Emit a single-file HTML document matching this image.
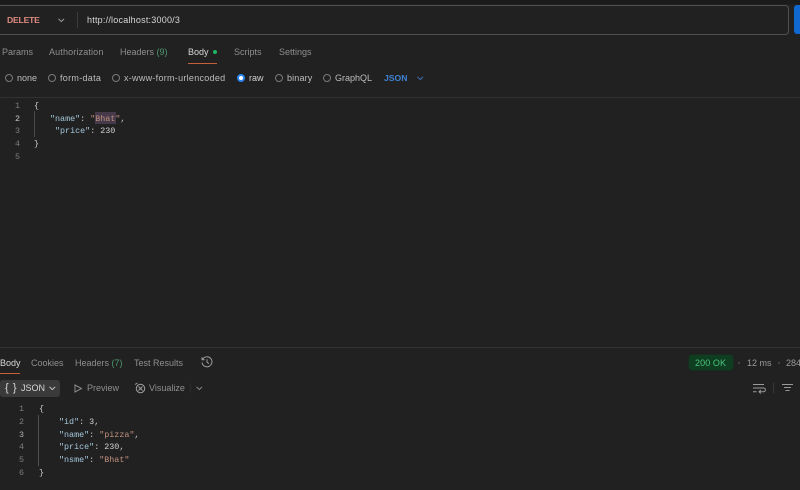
<!DOCTYPE html>
<html style="background:#212121"><head><meta charset="utf-8"><style>
*{margin:0;padding:0;box-sizing:border-box}
html,body{width:800px;height:490px;overflow:hidden;background:#212121}
#w{position:absolute;left:0;top:0;width:800px;height:490px;background:#212121;filter:blur(.35px);overflow:hidden;font-family:"Liberation Sans",sans-serif;color:#a6a6a6;font-size:9px}
.a{position:absolute;white-space:nowrap;line-height:12px}
.m{font-family:"Liberation Mono",monospace;font-size:8.4px;line-height:12px}
.ln{color:#7d7d7d}
.k{color:#a4c8dc}.s{color:#c0917e}.n{color:#d2d2d2}.p{color:#cccccc}
.r{position:absolute;width:8px;height:8px;border:1px solid #7a7a7a;border-radius:50%;top:74px}
.l{position:absolute}
.o{color:#bdbdbd;top:72px}
svg{position:absolute;fill:none;overflow:visible}
</style></head><body><div id="w">
<div class="l" style="left:0;top:0;width:800px;height:4px;background:#1b1b1b"></div>
<div class="l" style="left:-6px;top:5px;width:795px;height:30px;border:1px solid #505050;border-radius:4px"></div>
<div class="l" style="left:794px;top:5px;width:10px;height:29px;background:#0f69d1;border-radius:3px"></div>
<div class="a" style="left:7px;top:14px;color:#e08a80;font-weight:bold;font-size:8.6px;letter-spacing:-.2px">DELETE</div>
<svg style="left:58px;top:18px" width="7" height="5"><path d="M.5 .8 3.3 3.6 6.1 .8" stroke="#a0a0a0"/></svg>
<div class="l" style="left:77px;top:12px;width:1px;height:16px;background:#3c3c3c"></div>
<div class="a" style="left:87px;top:14px;color:#d8d8d8;font-size:9px;letter-spacing:.22px">http://localhost:3000/3</div>

<div class="a" style="left:2px;top:46px;color:#8f8f8f">Params</div>
<div class="a" style="left:49px;top:46px;color:#8f8f8f;letter-spacing:.15px">Authorization</div>
<div class="a" style="left:120px;top:46px;color:#8f8f8f">Headers <span style="color:#4f9a72">(9)</span></div>
<div class="a" style="left:188px;top:46px;color:#d8d8d8">Body</div>
<div class="l" style="left:213px;top:50px;width:4px;height:4px;border-radius:50%;background:#1fb565"></div>
<div class="l" style="left:188px;top:63px;width:29px;height:1px;background:#c4613c"></div>
<div class="a" style="left:234px;top:46px;color:#8f8f8f">Scripts</div>
<div class="a" style="left:279px;top:46px;color:#8f8f8f">Settings</div>

<div class="r" style="left:5px"></div><div class="a o" style="left:17px">none</div>
<div class="r" style="left:48px"></div><div class="a o" style="left:60px;letter-spacing:.3px">form-data</div>
<div class="r" style="left:112px"></div><div class="a o" style="left:124px;letter-spacing:.28px">x-www-form-urlencoded</div>
<div class="r" style="left:237px;border:2.5px solid #2a84ec;background:#fff"></div><div class="a o" style="left:249px;color:#d0d0d0">raw</div>
<div class="r" style="left:275px"></div><div class="a o" style="left:287px;letter-spacing:.15px">binary</div>
<div class="r" style="left:323px"></div><div class="a o" style="left:335px">GraphQL</div>
<div class="a" style="left:384px;top:72px;color:#3f82d4;font-weight:bold;font-size:8.6px">JSON</div>
<svg style="left:417px;top:76px" width="7" height="5"><path d="M.5 .8 3.3 3.6 6.1 .8" stroke="#3f76b8"/></svg>
<div class="l" style="left:0;top:97px;width:800px;height:1px;background:#313131"></div>

<div class="a m ln" style="left:15px;top:100px">1</div>
<div class="a m" style="left:15px;top:113px;color:#c8c8c8">2</div>
<div class="a m ln" style="left:15px;top:125px">3</div>
<div class="a m ln" style="left:15px;top:138px">4</div>
<div class="a m ln" style="left:15px;top:151px">5</div>
<div class="l" style="left:34px;top:111px;width:1px;height:26px;background:#4a4a4a"></div>
<div class="l" style="left:95px;top:112px;width:21px;height:12px;background:#46394a"></div>
<div class="a m p" style="left:34px;top:100px">{</div>
<div class="a m" style="left:50px;top:113px"><span class="k">"name"</span><span class="p">: </span><span class="s">"Bhat"</span><span class="p">,</span></div>
<div class="a m" style="left:55px;top:125px"><span class="k">"price"</span><span class="p">: </span><span class="n">230</span></div>
<div class="a m p" style="left:34px;top:138px">}</div>

<div class="l" style="left:0;top:347px;width:800px;height:1px;background:#333"></div>
<div class="a" style="left:0;top:357px;color:#d8d8d8">Body</div>
<div class="l" style="left:0;top:373px;width:20px;height:1px;background:#c4613c"></div>
<div class="a" style="left:31px;top:357px;color:#8f8f8f">Cookies</div>
<div class="a" style="left:75px;top:357px;color:#8f8f8f">Headers <span style="color:#4f9a72">(7)</span></div>
<div class="a" style="left:134px;top:357px;color:#8f8f8f">Test Results</div>
<svg style="left:201px;top:356px" width="12" height="12" stroke="#9a9a9a"><path d="M1.5 3.5A5 5 0 1 1 1 6.5M1 1.2V3.8H3.6M6 3.2V6.2L8 7.6"/></svg>

<div class="l" style="left:689px;top:355px;width:44px;height:15px;border-radius:3px;background:#0f3d20;box-shadow:0 0 2px #0f3d20"></div>
<div class="a" style="left:695px;top:357px;color:#4cc27e;letter-spacing:.1px">200 OK</div>
<div class="l" style="left:738px;top:362px;width:2px;height:2px;border-radius:50%;background:#4a4a4a"></div>
<div class="a" style="left:747px;top:357px;color:#9a9a9a">12 ms</div>
<div class="l" style="left:778px;top:362px;width:2px;height:2px;border-radius:50%;background:#4a4a4a"></div>
<div class="a" style="left:786px;top:357px;color:#9a9a9a">284 B</div>

<div class="l" style="left:0;top:380px;width:60px;height:17px;border-radius:3px;background:#3a3a3a"></div>
<div class="a" style="left:5px;top:382px;color:#d8d8d8;font-size:11px;letter-spacing:.6px">{ }</div>
<div class="a" style="left:21px;top:382px;color:#d8d8d8">JSON</div>
<svg style="left:49px;top:386px" width="7" height="5"><path d="M.5 .8 3.3 3.6 6.1 .8" stroke="#c8c8c8"/></svg>
<svg style="left:74px;top:384px" width="8" height="9"><path d="M1 1V8L7.5 4.5Z" stroke="#8a8a8a"/></svg>
<div class="a" style="left:87px;top:382px;color:#8f8f8f">Preview</div>
<svg style="left:134px;top:382px" width="12" height="12" stroke="#a0a0a0"><circle cx="6.5" cy="6.5" r="4.2"/><path d="M1 2.5 3.5 1M4.5 4.5 8.5 8.5M8.5 4.5 4.5 8.5"/></svg>
<div class="a" style="left:149px;top:382px;color:#8f8f8f">Visualize</div>
<div class="l" style="left:190px;top:383px;width:1px;height:10px;background:#2c2c2c"></div>
<svg style="left:196px;top:386px" width="7" height="5"><path d="M.5 .8 3.3 3.6 6.1 .8" stroke="#8a8a8a"/></svg>
<svg style="left:753px;top:383px" width="12" height="11" stroke="#9a9a9a"><path d="M0 1.5H11M0 5H10.5A1.8 1.8 0 0 1 10.5 8.8H6M7.8 7 6 8.8 7.8 10.5M0 8.8H3.5"/></svg>
<div class="l" style="left:773px;top:383px;width:1px;height:10px;background:#383838"></div>
<svg style="left:782px;top:383px" width="12" height="10" stroke="#9a9a9a"><path d="M0 1.5H11M2 4.5H9M3.5 7.5H7.5"/></svg>

<div class="a m ln" style="left:19px;top:403px">1</div>
<div class="a m ln" style="left:19px;top:416px">2</div>
<div class="a m" style="left:19px;top:429px;color:#b0b0b0">3</div>
<div class="a m ln" style="left:19px;top:441px">4</div>
<div class="a m ln" style="left:19px;top:454px">5</div>
<div class="a m ln" style="left:19px;top:467px">6</div>
<div class="l" style="left:38px;top:415px;width:1px;height:51px;background:#505050"></div>
<div class="a m p" style="left:39px;top:403px">{</div>
<div class="a m" style="left:59px;top:416px"><span class="k">"id"</span><span class="p">: </span><span class="n">3</span><span class="p">,</span></div>
<div class="a m" style="left:59px;top:429px"><span class="k">"name"</span><span class="p">: </span><span class="s">"pizza"</span><span class="p">,</span></div>
<div class="a m" style="left:59px;top:441px"><span class="k">"price"</span><span class="p">: </span><span class="n">230</span><span class="p">,</span></div>
<div class="a m" style="left:59px;top:454px"><span class="k">"nsme"</span><span class="p">: </span><span class="s">"Bhat"</span></div>
<div class="a m p" style="left:39px;top:467px">}</div>
</div></body></html>
